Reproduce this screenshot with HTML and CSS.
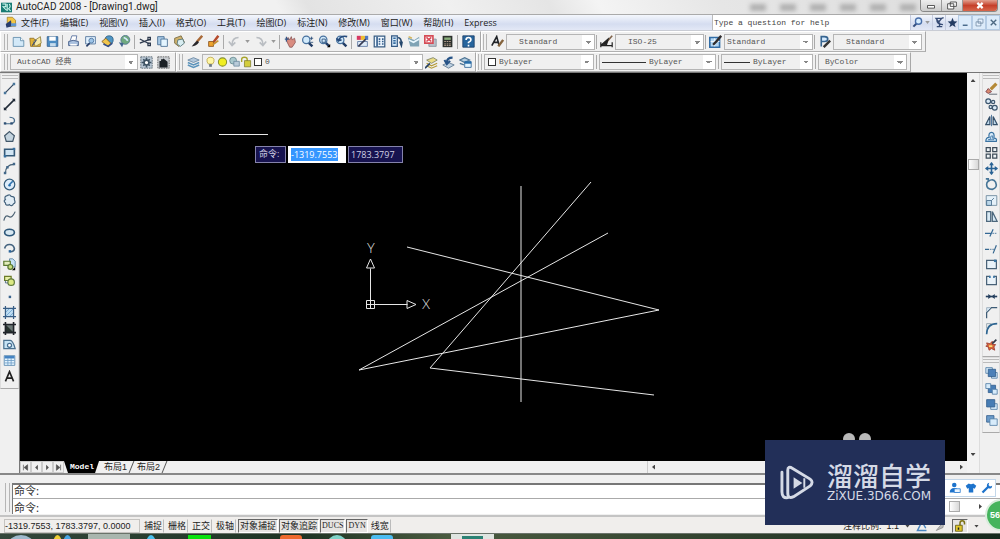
FILE: index.html
```html
<!DOCTYPE html>
<html lang="zh-CN">
<head>
<meta charset="utf-8">
<title>AutoCAD 2008 - [Drawing1.dwg]</title>
<link rel="stylesheet" href="styles.css">
</head>
<body>
<svg class="defs" aria-hidden="true">
  <symbol id="page" viewBox="0 0 16 16"><path d="M1.500 3h9l4 4v7h-13z" fill="#d3e9f8" stroke="#5b87a8"/><path d="M10.500 3v4h4" fill="#fff" stroke="#5b87a8"/></symbol>
  <symbol id="printer" viewBox="0 0 16 16"><path d="M4 7 6 1h6l-1 6" fill="#fff" stroke="#4c6698"/><path d="M2 8q5-3 12 0v5H2z" fill="#aac1df" stroke="#36507e"/><path d="M4 12h8" stroke="#fff" stroke-width="2"/></symbol>
  <symbol id="lens" viewBox="0 0 16 16"><path d="m9 9 5 5" stroke="#223d66" stroke-width="3"/><circle cx="6.500" cy="6" r="4.500" fill="#d2eafb" stroke="#47719e" stroke-width="1.500"/></symbol>
  <symbol id="brush" viewBox="0 0 16 16"><path d="m15 1-7 8" stroke="#a96937" stroke-width="3"/><path d="M9 7q-2 1-7 7 6 0 9-5z" fill="#27262b"/></symbol>
  <symbol id="sheets" viewBox="0 0 16 16"><path d="M2 2h8v10H2z" fill="#a9c9e5" stroke="#41698f"/><path d="M6 5h8v9H6z" fill="#e4f5ff" stroke="#41698f"/></symbol>
  <symbol id="layers" viewBox="0 0 16 16"><path d="m1 5 7-3 7 3-7 3z" fill="#b2c7db" stroke="#63819e"/><path d="m1 8 7 3 7-3M1 11l7 3 7-3" fill="none" stroke="#5c93bb" stroke-width="2"/></symbol>
  <symbol id="hatch" viewBox="0 0 16 16"><path d="M3 3h10v10H3z" fill="#bddcf2"/><path d="m3 8 5-5m-5 10L13 3M8 13l5-5" stroke="#6ca1ce"/><path d="M3 0v16M13 0v16M0 3h16M0 13h16" stroke="#385d85" stroke-width="1.500"/></symbol>
</svg>
<div class="app">
  <header class="titlebar">
    <svg class="logo" viewBox="0 0 16 16"><path d="M0 1h16v14H0z" fill="#197b74"/><path d="M2 3h5v4H3l5 5m1-9v10m3-10q3 4-1 7l3 3" fill="none" stroke="#d8fff5" stroke-width="1.500"/></svg>
    <h1>AutoCAD 2008 - [Drawing1.dwg]</h1>
    <div class="ghost" aria-hidden="true"><i></i><i></i><i></i><i></i><i></i><i></i></div>
    <div class="winbtns">
      <button aria-label="最小化"><svg viewBox="0 0 16 10"><path d="M4 5h8v3H4z" fill="#fff" stroke="#444"/></svg></button>
      <button aria-label="还原"><svg viewBox="0 0 16 10"><path d="M6 1h7v5H6zM3 3h7v6H3z" fill="#fff" stroke="#444"/></svg></button>
      <button class="close" aria-label="关闭"><svg viewBox="0 0 16 10"><path d="m5 2 6 6m0-6L5 8" stroke="#fff" stroke-width="2.500"/></svg></button>
    </div>
  </header>

  <nav class="menubar">
    <svg class="docicon" viewBox="0 0 16 16"><path d="M3 1h7l4 4v8H3z" fill="#f2c544" stroke="#a27d22"/><path d="m1 10 7-5 1 8-7 2z" fill="#283d70"/><path d="M8 9h7v4H8z" fill="#5f95d1"/></svg>
    <button>文件(F)</button><button>编辑(E)</button><button>视图(V)</button><button>插入(I)</button><button>格式(O)</button><button>工具(T)</button><button>绘图(D)</button><button>标注(N)</button><button>修改(M)</button><button>窗口(W)</button><button>帮助(H)</button><button>Express</button>
    <div class="helpbox">
      <input type="text" aria-label="Help" placeholder="Type a question for help">
      <button aria-label="Search"><svg viewBox="0 0 16 16"><path d="m2 14 5-5" stroke="#344e7f" stroke-width="3"/><circle cx="9.500" cy="6" r="4.500" fill="#d7edff" stroke="#4a6fa9" stroke-width="2"/></svg></button>
      <span class="caret"></span>
      <button aria-label="通讯中心"><svg viewBox="0 0 16 16"><path d="M3 2h8l-4 5zM4 3q0 8 9 8M8 8v5M4 14h8M11 2l3-1" fill="none" stroke="#364b75" stroke-width="2"/></svg></button>
      <button aria-label="收藏夹"><svg viewBox="0 0 16 16"><path d="m8 1 2 5 5 .5-4 3.500 1.500 5L8 12l-4.500 3L5 10 1 6.500 6 6z" fill="#243c63"/></svg></button>
      <button class="child" aria-label="最小化图形"><svg viewBox="0 0 16 16"><path d="M4 12h7" stroke="#426486" stroke-width="2"/></svg></button>
      <button class="child" aria-label="还原图形"><svg viewBox="0 0 16 16"><path d="M6 3h7v6H6zM3 7h7v6H3z" fill="#e6f2ff" stroke="#647f99"/></svg></button>
      <button class="child" aria-label="关闭图形"><svg viewBox="0 0 16 16"><path d="m4 4 8 8m0-8-8 8" stroke="#4c6882" stroke-width="2"/></svg></button>
    </div>
  </nav>

  <div class="row first">
    <div class="bar">
      <span class="grip"></span>
      <button aria-label="新建"><svg><use href="#page"/></svg></button>
      <button aria-label="打开"><svg viewBox="0 0 16 16"><path d="M1 4h5l1 2h7v8H2z" fill="#e3b338" stroke="#8f6f22"/><path d="m5 8 9-6 1 8-7 4z" fill="#f6e9a8" stroke="#8f7d36"/><path d="m4 13 5-7" stroke="#435070" stroke-width="1.500"/></svg></button>
      <button aria-label="保存"><svg viewBox="0 0 16 16"><path d="M1.500 2h13v12h-13z" fill="#4c8cc2" stroke="#335f8e"/><path d="M4 2h8v5H4z" fill="#fff"/><path d="M5 10h7v4H5z" fill="#c6dced"/></svg></button>
      <span class="sep"></span>
      <button aria-label="打印"><svg><use href="#printer"/></svg></button>
      <button aria-label="打印预览"><svg viewBox="0 0 16 16"><path d="M2 2h12v9H2z" fill="#e3f2ff" stroke="#4b6e96"/><path d="m3 14 4-4" stroke="#253c67" stroke-width="2"/><circle cx="9" cy="7" r="3" fill="#9dc4e7" stroke="#466e99"/></svg></button>
      <button aria-label="发布"><svg viewBox="0 0 16 16"><circle cx="10" cy="6" r="5" fill="#4f95c3" stroke="#306084"/><path d="m1 8 5-4 6 6-4 4z" fill="#f1c54c" stroke="#7f5a21"/><path d="m3 11 6 3 5-4" fill="none" stroke="#344f88" stroke-width="2"/></svg></button>
      <button aria-label="三维 DWF"><svg viewBox="0 0 16 16"><circle cx="9" cy="6" r="5.500" fill="#6fa97f" stroke="#4e718e"/><path d="M7 3q3 1 5 4" stroke="#d5ecff" fill="none" stroke-width="2"/><path d="m1 9 6 1-2 5z" fill="#43658d"/></svg></button>
      <span class="sep"></span>
      <button aria-label="剪切"><svg viewBox="0 0 16 16"><path d="m1 5 12 6M1 10l13-5" stroke="#2e3a4e" stroke-width="1.500"/><path d="M11 3h3v3h-3zM11 10h3v3h-3z" fill="none" stroke="#2e3a4e" stroke-width="1.500"/></svg></button>
      <button aria-label="复制"><svg><use href="#sheets"/></svg></button>
      <button aria-label="粘贴"><svg viewBox="0 0 16 16"><path d="m2 4 8-3 4 8-7 5-5-4z" fill="#d0b26c" stroke="#71653e"/><path d="m6 6 6-1 2 5-5 4-4-3z" fill="#d9edf1" stroke="#4b6e74"/></svg></button>
      <button aria-label="特性匹配"><svg><use href="#brush"/></svg></button>
      <button aria-label="块编辑器"><svg viewBox="0 0 16 16"><path d="m14 1-6 8" stroke="#b54a2b" stroke-width="3"/><path d="M2 8h6v6H2z" fill="#f0a42d" stroke="#86501e"/><path d="m7 12 7-5" stroke="#c7902d" stroke-width="2"/></svg></button>
      <span class="sep"></span>
      <button aria-label="放弃"><svg viewBox="0 0 16 16"><path d="M13 3Q5 3 5 12M1 8l4 5 4-4" fill="none" stroke="#b9bdc2" stroke-width="2"/></svg></button><span class="caret"></span>
      <button aria-label="重做"><svg viewBox="0 0 16 16"><path d="M3 3q8 0 8 9m4-4-4 5-4-4" fill="none" stroke="#b9bdc2" stroke-width="2"/></svg></button><span class="caret"></span>
      <span class="sep"></span>
      <button aria-label="实时平移"><svg viewBox="0 0 16 16"><path d="m3 7 2-4 2 3 2-4 1 4 3-2 1 5-4 6H7z" fill="#d98c80" stroke="#8c5656"/><path d="M1 5h5M3 2v6" stroke="#365787" stroke-width="1.500"/></svg></button>
      <button aria-label="实时缩放"><svg viewBox="0 0 16 16"><use href="#lens"/><path d="M11 4h4m-2-2v4m-2 3h4" stroke="#244774"/></svg></button>
      <button aria-label="窗口缩放"><svg viewBox="0 0 16 16"><use href="#lens"/><path d="M5 5h4v4H5z" fill="none" stroke="#244774"/><path d="M15 11v4h-4z"/></svg></button>
      <button aria-label="缩放上一个"><svg viewBox="0 0 16 16"><use href="#lens"/><path d="M15 2Q7 0 4 7l-2-3m2 3 4-1" fill="none" stroke="#264b7c" stroke-width="2"/></svg></button>
      <span class="sep"></span>
      <button aria-label="特性"><svg viewBox="0 0 16 16"><path d="M1 1h5v5H1z" fill="#d63863"/><path d="M6 1h5v5H6z" fill="#eebd30"/><path d="M11 1h4v5h-4z" fill="#5278c2"/><path d="M2 8h12v6H2z" fill="#dfebf7" stroke="#56719e"/><path d="m3 14 9-9" stroke="#393d54" stroke-width="2"/></svg></button>
      <button aria-label="设计中心"><svg viewBox="0 0 16 16"><path d="M1.500 1.500h13v13h-13z" fill="#eef7ff" stroke="#385c82" stroke-width="1.500"/><path d="M5 2v12M7 5h2m2 0h2M7 8h2m2 0h2M7 11h2m2 0h2" stroke="#355f8d" stroke-width="2"/></svg></button>
      <button aria-label="工具选项板"><svg viewBox="0 0 16 16"><path d="M2 1h7v13H2z" fill="#d7ebfb" stroke="#365b85" stroke-width="1.500"/><path d="M4 4h3M4 7h3M4 10h3" stroke="#356b9e" stroke-width="2"/><path d="M10 3q4 1 4 7m-2-2 2 5 1-5" fill="none" stroke="#26486d" stroke-width="2"/></svg></button>
      <button aria-label="图纸集"><svg viewBox="0 0 16 16"><path d="m1 3 8 3 6-4v12H4z" fill="#7fa3b5"/><path d="m2 6 6 3 7-4" stroke="#e8f6fd" stroke-width="2" fill="none"/><path d="m2 2 4 2" stroke="#d5b55b" stroke-width="2"/></svg></button>
      <button aria-label="标记集"><svg viewBox="0 0 16 16"><path d="M6 5h9v9H6z" fill="#b8c0c8" stroke="#84909b"/><path d="M1 1h10v9H1z" fill="#fff" stroke="#d54c56" stroke-width="2"/><path d="m3 3 6 5m0-5L3 8" stroke="#da4b58" stroke-width="2"/></svg></button>
      <button aria-label="快速计算器"><svg viewBox="0 0 16 16"><path d="M2 1h12v14H2z" fill="#2d312e"/><path d="M4 3h8v3H4z" fill="#8aae7c"/><path d="M4 8h2m1 0h2m1 0h2M4 11h2m1 0h2m1 0h2M4 13h2m1 0h2m1 0h2" stroke="#d5b9a5"/></svg></button>
      <span class="sep"></span>
      <button aria-label="帮助"><svg viewBox="0 0 16 16"><path d="M1 1h14v14H1z" fill="#27659d" stroke="#173c66"/><path d="M5 6q0-3 3-3t3 3q0 1-3 3v1m0 2v2" fill="none" stroke="#fff" stroke-width="2"/></svg></button>
    </div>
    <div class="bar styles">
      <span class="grip"></span>
      <button aria-label="文字样式"><svg viewBox="0 0 16 16"><path d="M1 13 7 2l3 11M4 9h6" fill="none" stroke="#202327" stroke-width="2"/><path d="m15 6-6 8" stroke="#85643e" stroke-width="3"/></svg></button>
      <select class="combo c88 in" aria-label="文字样式"><option>Standard</option></select>
      <span class="sep"></span>
      <button aria-label="标注样式"><svg viewBox="0 0 16 16"><path d="m15 1-7 8" stroke="#7e6149" stroke-width="2"/><path d="M10 5 2 12h6zM1 9v6M15 9v6M1 13h14" fill="#222" stroke="#222" stroke-width="1.500"/></svg></button>
      <select class="combo c88 in" aria-label="标注样式"><option>ISO-25</option></select>
      <span class="sep"></span>
      <button aria-label="表格样式"><svg viewBox="0 0 16 16"><path d="M1 3h12v12H1z" fill="#b3d7f4" stroke="#326da6" stroke-width="2"/><path d="M2 8h11M7 4v10" stroke="#fff"/><path d="m15 1-6 7-4 4" stroke="#302d2e" stroke-width="3"/></svg></button>
      <select class="combo c88 near" aria-label="表格样式"><option>Standard</option></select>
      <span class="sep"></span>
      <button aria-label="多重引线样式"><svg viewBox="0 0 16 16"><path d="M4 14V2h4q4 0 4 3T8 8H5" fill="#d4eaff" stroke="#376591" stroke-width="2"/><path d="m15 7-4 4-4 4" stroke="#333" stroke-width="3"/></svg></button>
      <select class="combo c88 in" aria-label="多重引线样式"><option>Standard</option></select>
    </div>
  </div>

  <div class="row">
    <div class="bar">
      <span class="grip"></span>
      <select class="combo c128" aria-label="工作空间"><option>AutoCAD 经典</option></select>
      <button aria-label="工作空间设置"><svg viewBox="0 0 16 16"><path d="M1 1h14v14H1z" fill="#b9c7d4" stroke="#4b5964" stroke-dasharray="2 1"/><path d="M8 2v12M2 8h12M4 4l8 8m0-8-8 8" stroke="#3d5161" stroke-width="2"/><circle cx="8" cy="8" r="3" fill="#fff" stroke="#3d5161" stroke-width="2"/></svg></button>
      <button aria-label="我的工作空间"><svg viewBox="0 0 16 16"><path d="M1 1h14v14H1z" fill="#c8ccd0" stroke="#555" stroke-dasharray="2 1"/><path d="M3 6h2V4h2l1-1 5 4v7H3z" fill="#1c2126"/></svg></button>
    </div>
    <div class="bar layerbar">
      <span class="grip"></span>
      <button aria-label="图层特性"><svg><use href="#layers"/></svg></button>
      <div class="layerbox">
        <svg viewBox="0 0 16 16"><path d="M5 11Q2 8 3 4q1-3 5-3t5 3q1 4-2 7z" fill="#fff7a6" stroke="#b09431"/><path d="M6 11h4v4H6z" fill="#6c7884"/></svg>
        <svg viewBox="0 0 16 16"><circle cx="8" cy="8" r="6" fill="#f0ee22" stroke="#88902d" stroke-width="1.500"/></svg>
        <svg viewBox="0 0 16 16"><circle cx="6" cy="6" r="5" fill="#a9c8cd" stroke="#557982"/><path d="M7 7h8v7H7z" fill="#b9cbd9" stroke="#5f7d95"/></svg>
        <svg viewBox="0 0 16 16"><path d="M1 8V4q0-3 4-3t4 3v4" fill="none" stroke="#a8a42b" stroke-width="2"/><path d="M5 6h9v9H5z" fill="#d4cd3d" stroke="#777426"/></svg>
        <span class="swatch"></span>
        <select class="bare" aria-label="图层"><option>0</option></select>
      </div>
      <button aria-label="将对象的图层置为当前"><svg viewBox="0 0 16 16"><path d="m2 5 8-3 5 3-7 4z" fill="#eadd86" stroke="#777d60"/><path d="m2 9 6 3 7-3M2 12l6 3 7-3" fill="none" stroke="#b49a36" stroke-width="1.500"/><path d="m0 15 6-6" stroke="#274267" stroke-width="2"/></svg></button>
      <button aria-label="上一个图层"><svg viewBox="0 0 16 16"><path d="m1 11 7-3 7 3-7 4z" fill="#bed1e1" stroke="#57728b"/><path d="M13 2Q6 2 6 8M3 5l3 5 4-4" fill="none" stroke="#265387" stroke-width="2.500"/></svg></button>
      <button aria-label="图层状态管理器"><svg viewBox="0 0 16 16"><path d="m1 5 6-3 6 3-6 3zM1 9l5 2" fill="#b7cfe1" stroke="#4d7595" stroke-width="1.500"/><path d="M7 7h8v7H7z" fill="#e2f5ff" stroke="#275f93"/><path d="M7 8h8" stroke="#276da9" stroke-width="3"/></svg></button>
    </div>
    <div class="bar props">
      <span class="grip"></span>
      <div class="layerbox c110"><span class="swatch"></span><select class="bare" aria-label="颜色"><option>ByLayer</option></select></div>
      <span class="sep"></span>
      <div class="layerbox c116"><span class="ltype"></span><select class="bare" aria-label="线型"><option>ByLayer</option></select></div>
      <span class="sep"></span>
      <div class="layerbox c92"><span class="ltype short"></span><select class="bare" aria-label="线宽"><option>ByLayer</option></select></div>
      <span class="sep"></span>
      <select class="combo c88" aria-label="打印样式"><option>ByColor</option></select>
    </div>
  </div>

  <main class="work">
    <aside class="tools">
      <span class="hgrip"></span>
      <button aria-label="直线"><svg viewBox="0 0 16 16"><path d="M3 13 13 3" stroke="#33475d" stroke-width="1.500"/><path d="M1 12h3v3H1zM12 1h3v3h-3z" fill="#48769b"/></svg></button>
      <button aria-label="构造线"><svg viewBox="0 0 16 16"><path d="M2 14 14 2" stroke="#222c38" stroke-width="2"/><path d="M1 11v4h4zM11 1h4v4z" fill="#1f2937"/></svg></button>
      <button aria-label="多段线"><svg viewBox="0 0 16 16"><path d="M2 12h9q4-2 3-5t-6-3" fill="none" stroke="#486d8c" stroke-width="1.500"/><path d="M1 10h3v3H1zM9 10h3v3H9z" fill="#2e5074"/></svg></button>
      <button aria-label="正多边形"><svg viewBox="0 0 16 16"><path d="m8 2 6 5-2 7H4L2 7z" fill="#c4d4df" stroke="#42586a" stroke-width="1.500"/></svg></button>
      <button aria-label="矩形"><svg viewBox="0 0 16 16"><path d="M2 4h12v8H2z" fill="#d2e6f4" stroke="#355a79" stroke-width="2"/><path d="M1 11h3v3H1zM12 2h3v3h-3z" fill="#38709f"/></svg></button>
      <button aria-label="圆弧"><svg viewBox="0 0 16 16"><path d="M3 14Q3 3 14 3" fill="none" stroke="#445f74" stroke-width="1.500"/><path d="M1 12h3v3H1zM4 5h3v3H4zM12 1h3v3h-3z" fill="#426789"/></svg></button>
      <button aria-label="圆"><svg viewBox="0 0 16 16"><circle cx="8" cy="8" r="6.500" fill="#ddecfa" stroke="#355d7c" stroke-width="1.500"/><path d="m8 8 4-4" stroke="#2c72ae" stroke-width="2"/><circle cx="8" cy="9" r="1.500" fill="#236eae"/></svg></button>
      <button aria-label="修订云线"><svg viewBox="0 0 16 16"><path d="M5 2q4-2 5 1 5 0 4 4 2 4-1 5-2 4-5 1-5 2-5-2-3-3 0-4-2-4 2-5z" fill="#e2edf5" stroke="#45637d" stroke-width="1.500"/></svg></button>
      <button aria-label="样条曲线"><svg viewBox="0 0 16 16"><path d="M1 13q2-8 6-5t8-6" fill="none" stroke="#4d6273" stroke-width="1.500"/></svg></button>
      <button aria-label="椭圆"><svg viewBox="0 0 16 16"><ellipse cx="8" cy="8" rx="6" ry="4" fill="#d8e8f2" stroke="#2d577a" stroke-width="2"/></svg></button>
      <button aria-label="椭圆弧"><svg viewBox="0 0 16 16"><path d="M2 8q1-5 6-5t6 5q0 4-5 4" fill="none" stroke="#45637f" stroke-width="2"/><path d="M7 10h3v3H7z" fill="#2c659b"/></svg></button>
      <button aria-label="插入块"><svg viewBox="0 0 16 16"><path d="M8 1h4l3 3v7H8z" fill="#c6e2f5" stroke="#547b9b"/><path d="M1 4h8v5H1z" fill="#e3edbd" stroke="#5b792f" stroke-width="1.500"/><circle cx="9" cy="11" r="3" fill="#c9dd80" stroke="#567631" stroke-width="1.500"/><path d="M15 11v4h-4z"/></svg></button>
      <button aria-label="创建块"><svg viewBox="0 0 16 16"><path d="M2 3h8v5H2z" fill="#e6efa7" stroke="#6b7b27" stroke-width="1.500"/><circle cx="10" cy="10" r="4" fill="#dce984" stroke="#617b3c" stroke-width="1.500"/><path d="M3 8v3h3" fill="none" stroke="#435f7b"/></svg></button>
      <button aria-label="点"><svg viewBox="0 0 16 16"><path d="M7 7h3v3H7z" fill="#3a648e"/></svg></button>
      <button aria-label="图案填充"><svg><use href="#hatch"/></svg></button>
      <button aria-label="渐变色"><svg viewBox="0 0 16 16"><path d="M3 3h10v10H3z" fill="#6c7977"/><path d="m3 3 10 10H3z" fill="#27332f"/><path d="M3 0v16M13 0v16M0 3h16M0 13h16" stroke="#20242a" stroke-width="2"/></svg></button>
      <button aria-label="面域"><svg viewBox="0 0 16 16"><path d="M1 3h8q3 0 6 10H1z" fill="#c7e3f4" stroke="#4b7190" stroke-width="1.500"/><circle cx="8" cy="9" r="2.500" fill="#fff" stroke="#466f92" stroke-width="1.500"/></svg></button>
      <button aria-label="表格"><svg viewBox="0 0 16 16"><path d="M1.500 2h13v12h-13z" fill="#e5f5ff" stroke="#5585ac"/><path d="M2 4h12" stroke="#4382c2" stroke-width="3"/><path d="M2 8h12M2 11h12M6 5v9m4-9v9" stroke="#6c9dc6"/></svg></button>
      <button aria-label="多行文字"><svg viewBox="0 0 16 16"><path d="M3 14 8 2l5 12M5 10h6" fill="none" stroke="#222" stroke-width="2"/></svg></button>
    </aside>

    <section class="view">
      <div class="canvas">
        <svg class="drawing" role="img" aria-label="图形">
          <g fill="none" stroke="#e6e6e6">
            <path d="M199 61.500h49M501 113v216M571 109 410 295l224 27M588 160 339 297l300-60-252-63"/>
            <path d="M350.500 235.500v-40M346.500 231.500h41M346.500 227.500h8v8h-8zM350.500 186l-4 9h8zM396 231.500l-9-4v8z"/>
          </g>
          <text x="347" y="180">Y</text><text x="402" y="236">X</text>
        </svg>
        <form class="dyn">
          <label for="dx">命令:</label>
          <span class="cell on"><mark><input id="dx" value="-1319.7553"></mark></span>
          <input class="cell" aria-label="Y" value="1783.3797">
        </form>
      </div>
      <div class="tabs">
        <button class="nav" aria-label="第一个"><svg viewBox="0 0 10 10"><path d="M2 1v8M8 1v8L3 5z" fill="#555" stroke="#555"/></svg></button>
        <button class="nav" aria-label="上一个"><svg viewBox="0 0 10 10"><path d="M7 1v8L3 5z" fill="#555"/></svg></button>
        <button class="nav" aria-label="下一个"><svg viewBox="0 0 10 10"><path d="M3 1v8l4-4z" fill="#555"/></svg></button>
        <button class="nav" aria-label="最后一个"><svg viewBox="0 0 10 10"><path d="M8 1v8M2 1v8l5-4z" fill="#555" stroke="#555"/></svg></button>
        <button class="tab active">Model</button><button class="tab">布局1</button><button class="tab">布局2</button>
        <div class="hscroll"><span class="tri left"></span><span class="tri right"></span></div>
      </div>
    </section>

    <div class="vscroll"><span class="tri up"></span><span class="thumb"></span><span class="tri down"></span></div>

    <aside class="modify">
      <div class="tools">
      <span class="hgrip"></span>
      <button aria-label="删除"><svg viewBox="0 0 16 16"><path d="m14 2-7 7" stroke="#b48935" stroke-width="4"/><path d="m4 8 4 4-4 2-3-2z" fill="#da8a70" stroke="#743742"/><path d="M5 15h10" stroke="#485260"/></svg></button>
      <button aria-label="复制对象"><svg viewBox="0 0 16 16"><g fill="#dae9f5" stroke="#3c566e" stroke-width="1.500"><circle cx="4" cy="4" r="3"/><circle cx="10" cy="5" r="2"/><circle cx="7" cy="11" r="2"/><circle cx="12" cy="12" r="3"/></g></svg></button>
      <button aria-label="镜像"><svg viewBox="0 0 16 16"><path d="M6 3v10H1zM10 3v10h5z" fill="#bfd9eb" stroke="#36516a" stroke-width="1.500"/><path d="M8 1v14" stroke="#2f5f8c"/></svg></button>
      <button aria-label="偏移"><svg viewBox="0 0 16 16"><path d="M1 14h13q1-4-3-4 1-7-3-7T5 9q-4 0-4 5z" fill="#d7ebfa" stroke="#3a73a2" stroke-width="1.500"/><path d="M4 12h7q-2-1-2-5-3 0-2 4z" fill="none" stroke="#3a73a2"/></svg></button>
      <button aria-label="阵列"><svg viewBox="0 0 16 16"><path d="M1.500 2h5v5h-5zM9.500 2h5v5h-5zM1.500 10h5v5h-5zM9.500 10h5v5h-5z" fill="#edf2f5" stroke="#3d4c59" stroke-width="1.500"/></svg></button>
      <button aria-label="移动"><svg viewBox="0 0 16 16"><path d="M8 1v14M1 8h14" stroke="#286294" stroke-width="2"/><path d="M5 4h6L8 0zM5 12h6l-3 4zM4 5v6L0 8zM12 5v6l4-3z" fill="#286294"/></svg></button>
      <button aria-label="旋转"><svg viewBox="0 0 16 16"><path d="M4 4q6-4 9 1 3 7-4 9-7 0-7-6 0-3 2-4V1H1" fill="none" stroke="#477698" stroke-width="2"/></svg></button>
      <button aria-label="缩放"><svg viewBox="0 0 16 16"><path d="M1.500 2h13v12h-13z" fill="#e5f1f9" stroke="#668298"/><path d="M2 8h6v6H2z" fill="#bdd8ea" stroke="#426987"/><path d="M8 8l3-3" stroke="#426987"/></svg></button>
      <button aria-label="拉伸"><svg viewBox="0 0 16 16"><path d="M2 2h5v12H2zM9 2l6 12H9z" fill="#d9eaf5" stroke="#4d687d" stroke-width="1.500"/></svg></button>
      <button aria-label="修剪"><svg viewBox="0 0 16 16"><path d="m6 13 4-9M0 9h7" stroke="#346895" stroke-width="1.500"/><path d="M9 9h6" stroke="#346895" stroke-dasharray="2 1"/></svg></button>
      <button aria-label="延伸"><svg viewBox="0 0 16 16"><path d="m10 14 4-10M0 9h5" stroke="#376890" stroke-width="1.500"/><path d="M6 9h5" stroke="#376890" stroke-dasharray="2 1"/></svg></button>
      <button aria-label="打断于点"><svg viewBox="0 0 16 16"><path d="M2 3h12v10H2z" fill="#e9f2f9" stroke="#486177" stroke-width="1.500"/><path d="M11 2h3v3h-3z" fill="#3975a4"/></svg></button>
      <button aria-label="打断"><svg viewBox="0 0 16 16"><path d="M6 3H2v10h12V3h-3" fill="#e9f2f9" stroke="#486177" stroke-width="1.500"/><path d="M5 2h2v3H5zM10 2h2v3h-2z" fill="#3975a4"/></svg></button>
      <button aria-label="合并"><svg viewBox="0 0 16 16"><path d="M1 8h14" stroke="#243f5e" stroke-width="2"/><path d="M4 5v6l4-3zM12 5v6L8 8z" fill="#243f5e"/></svg></button>
      <button aria-label="倒角"><svg viewBox="0 0 16 16"><path d="M2 15V8l6-6h7" fill="none" stroke="#3d5b75" stroke-width="1.500"/><path d="M2 7V2h5" fill="#d7e8f4" stroke="#96a9b8"/></svg></button>
      <button aria-label="圆角"><svg viewBox="0 0 16 16"><path d="M2 15Q2 2 15 2" fill="none" stroke="#2e6591" stroke-width="2"/><path d="M2 8V2h6" fill="none" stroke="#8c9ca9"/></svg></button>
      <button aria-label="分解"><svg viewBox="0 0 16 16"><path d="m2 6 4 1 3-3v4l4 0-2 3 1 4-4-2-3 2-1-4-3-1 2-1z" fill="#d9693c" stroke="#9b382c"/><path d="m9 7 5-5" stroke="#333b49" stroke-width="2"/><path d="M5 10h4" stroke="#ffe476" stroke-width="2"/></svg></button>
      </div>
      <div class="tools">
      <span class="hgrip"></span>
      <button aria-label="前置"><svg viewBox="0 0 16 16"><path d="M1 2h8v7H1zM8 8h7v7H8z" fill="#d7ebfa" stroke="#4f7ca5"/><path d="M4 4h9v9H4z" fill="#4b80b8" stroke="#315e8c"/></svg></button>
      <button aria-label="后置"><svg viewBox="0 0 16 16"><path d="M4 4h9v9H4z" fill="#477db5" stroke="#315e8c"/><path d="M1 2h6v6H1zM9 9h6v6H9z" fill="#d7ebfa" stroke="#4f7ca5"/></svg></button>
      <button aria-label="置于对象之上"><svg viewBox="0 0 16 16"><path d="M7 7h8v7H7z" fill="#d7ebfa" stroke="#4f7ca5"/><path d="M2 2h10v9H2z" fill="#477db5" stroke="#315e8c"/></svg></button>
      <button aria-label="置于对象之下"><svg viewBox="0 0 16 16"><path d="M2 2h9v8H2z" fill="#6b9bca" stroke="#315e8c"/><path d="M6 6h9v8H6z" fill="#d7ebfa" stroke="#4f7ca5"/></svg></button>
      </div>
    </aside>
  </main>

  <section class="command">
    <span class="grip"></span>
    <div class="lines">
      <p>命令:</p>
      <div class="prompt"><label for="cmd">命令:</label><input id="cmd" type="text"><span class="thumb"></span><span class="tri right"></span></div>
    </div>
  </section>

  <footer class="status">
    <output>-1319.7553, 1783.3797, 0.0000</output>
    <button>捕捉</button><button>栅格</button><button>正交</button><button>极轴</button><button class="on">对象捕捉</button><button class="on">对象追踪</button><button class="on mono">DUCS</button><button class="on mono">DYN</button><button>线宽</button>
    <div class="tray">
      <span>注释比例:&nbsp;&nbsp;1:1</span><span class="tri down"></span>
      <svg viewBox="0 0 16 16"><path d="m8 2-6 12h12M8 2l5 9" fill="none" stroke="#4a86c1" stroke-width="2"/></svg>
      <svg viewBox="0 0 16 16"><path d="m3 14 10-12-1 8z" fill="#bbb" stroke="#888"/></svg>
      <button class="on" aria-label="锁定"><svg viewBox="0 0 16 16"><path d="M8 8V4q0-3 3-3t3 3v2" fill="none" stroke="#7c7214" stroke-width="2"/><path d="M2 7h9v8H2z" fill="#e0c62c" stroke="#58510f"/><path d="M6 10v3" stroke="#222" stroke-width="2"/></svg></button>
      <span class="tri down"></span>
    </div>
  </footer>

  <div class="taskbar" aria-hidden="true">
    <i class="t1"></i><i class="t2"></i><i class="t3"></i><i class="t4"></i><i class="t5"></i><i class="t6"></i><i class="t7"></i><i class="t8"></i><i class="t9"></i><i class="t10"></i>
  </div>
</div>

<div class="ears" aria-hidden="true"><i></i><i></i></div>
<div class="ime">
  <button aria-label="用户"><svg viewBox="0 0 16 16"><circle cx="7" cy="4" r="3" fill="#1d73cc"/><path d="M1 14q0-6 6-6t6 6z" fill="#1d73cc"/><path d="M7 9h8v5H7z" fill="#eaf5ff" stroke="#1d73cc"/></svg></button>
  <button aria-label="皮肤"><svg viewBox="0 0 16 16"><path d="M5 2q3 2 6 0l4 3-2 4-2-1v6H5V8L3 9 1 5z" fill="#1d73cc"/></svg></button>
  <button aria-label="设置"><svg viewBox="0 0 16 16"><path d="m2 14 8-8" stroke="#1d73cc" stroke-width="3"/><path d="M11 1Q7 2 8 6t6 2l1-3-3 1-2-2z" fill="#1d73cc"/></svg></button>
</div>
<div class="ball">56</div>
<div class="watermark">
  <svg viewBox="0 0 36 36"><g fill="none" stroke="#d5dae6" stroke-width="3" stroke-linecap="round"><path d="M2 7v20q0 7 6 6"/><path d="M8 28V5q0-5 5-2l18 11q4 3 0 7L14 32q-6 3-6-4"/></g><path d="m14 12 9 6-9 6zM24 13h2v10h-2z" fill="#d5dae6"/></svg>
  <div><strong>溜溜自学</strong><span>ZiXUE.3D66.COM</span></div>
</div>
</body>
</html>
```
FILE: styles.css
```css
* { box-sizing: border-box; }
html, body { height: 100%; }
body {
  margin: 0;
  position: relative;
  overflow: hidden;
  background: #f0f0f0;
  color: #222;
  font: 9px/12px "Liberation Sans", "Noto Sans CJK SC", sans-serif;
}
button, input, select { font: inherit; color: inherit; margin: 0; padding: 0; border: 0; background: none; border-radius: 0; outline: 0; }
svg { display: block; flex: none; }
.defs { position: absolute; width: 0; height: 0; }
.app { display: flex; flex-direction: column; min-height: 100vh; }

.titlebar {
  display: flex;
  align-items: center;
  height: 15px;
  padding-left: 1px;
  background: linear-gradient(60deg, #f1f1f1 28%, #e3e3e3 31%, #f0f0f0 45%, #e5e5e5 55%, #f4f4f4 60%, #e6e6e6 72%, #dcdcdc);
  border-bottom: 1px solid #aaa;
}
.logo { width: 11px; height: 11px; }
.titlebar h1 { margin: 0 0 0 4px; font: 10px/14px Roboto, sans-serif; }
.ghost { display: flex; gap: 14px; margin-left: auto; margin-right: 4px; filter: blur(2px); }
.ghost i { width: 16px; height: 7px; background: #b0b0b0; }
.winbtns { display: flex; align-self: flex-start; height: 12px; margin-right: 2px; border: 1px solid #888; border-top: 0; border-radius: 0 0 4px 4px; overflow: hidden; }
.winbtns button { display: grid; place-items: center; width: 21px; background: linear-gradient(#eee, #ccc); border-right: 1px solid #999; }
.winbtns svg { width: 14px; height: 9px; }
.winbtns .close { width: 34px; border: 0; background: linear-gradient(#e2a08f, #c5402a 50%, #d8674c); }

.menubar { display: flex; align-items: center; height: 16px; background: linear-gradient(#f4f7fd, #d5ddf0 60%, #e3e8f6); border-bottom: 1px solid #c9ccd4; }
.docicon { width: 12px; height: 13px; margin: 0 4px 0 5px; }
.menubar > button { padding: 0 6px 0 5px; font: 9px/15px "Open Sans", "Noto Sans CJK SC", sans-serif; }
.menubar > button:first-of-type { padding-left: 0; }
.helpbox { display: flex; align-items: center; margin-left: auto; }
.helpbox input { width: 198px; height: 15px; padding-left: 1px; background: #fff; border-left: 1px solid #bbb; font: 8px/12px "Liberation Mono", monospace; }
.helpbox input::placeholder { color: #444; opacity: 1; }
.helpbox button { display: grid; place-items: center; width: 13px; height: 15px; border-left: 1px solid #c5cce0; }
.helpbox .child { width: 14px; background: #dcebfa; border: 1px solid #b4cbe4; }
.helpbox svg { width: 11px; height: 11px; }

.row { display: flex; height: 20px; background: #f0f0f0; }
.row.first { height: 21px; }
.bar { display: flex; align-items: center; padding: 0 3px; border: 1px solid #fff; border-right-color: #a8a8a8; border-bottom-color: #b0b0b0; }
.grip { width: 4px; height: 16px; margin-right: 2px; border: 1px solid #b5b5b5; border-width: 0 1px; flex: none; }
.sep { width: 1px; height: 14px; margin: 0 2px 0 1px; background: #aaa; }
.bar > button { display: grid; place-items: center; width: 17px; height: 17px; }
.bar > button svg { width: 13px; height: 13px; }
.styles { padding-left: 1px; }
.styles .sep { margin: 0 1px; }
.props { padding-left: 1px; }
.props .sep { margin: 0 2px; }
.layerbar { padding: 0 1px 0 2px; }
.caret { width: 9px; height: 3px; background: #999; clip-path: polygon(25% 0, 75% 0, 50% 100%); }
.combo, .bare { appearance: none; font: 8px/12px "Liberation Mono", "Noto Sans CJK SC", monospace; color: #555; }
.combo, .layerbox {
  height: 16px;
  border: 1px solid #b5b5b5;
  background-color: #f0f0f0;
  background-image: linear-gradient(to bottom left, #888 50%, transparent 0), linear-gradient(to bottom right, #888 50%, transparent 0), linear-gradient(#fff, #fff);
  background-position: right 6px top 6px, right 3px top 6px, right;
  background-size: 3px 3px, 3px 3px, 12px 100%;
  background-repeat: no-repeat;
}
.combo { padding-left: 6px; }
.combo.in { padding-left: 12px; }
.combo.near { padding-left: 2px; }
.c88 { width: 89px; }
.c128 { width: 128px; }
.layerbox { display: flex; align-items: center; gap: 1px; width: 221px; padding-left: 2px; }
.layerbox svg { width: 11px; height: 12px; }
.c110 { width: 110px; }
.c116 { width: 117px; }
.c92 { width: 92px; }
.bare { flex: 1; min-width: 0; padding-left: 2px; }
.swatch { flex: none; width: 8px; height: 8px; margin-left: 1px; border: 1px solid #333; background: #fff; }
.ltype { width: 44px; height: 1px; background: #333; flex: none; }
.ltype.short { width: 26px; }

.work { display: flex; flex: 1; min-height: 0; border-top: 1px solid #777; }
.tools { display: flex; flex-direction: column; align-items: center; width: 19px; align-self: flex-start; padding: 1px 0 4px; border: 1px solid #ddd; border-bottom-color: #aaa; }
.tools button { display: grid; place-items: center; width: 17px; height: 16px; }
.tools svg { width: 13px; height: 13px; }
.hgrip { width: 16px; height: 4px; margin-bottom: 1px; border: 1px solid #bbb; border-width: 1px 0; }
.view { display: flex; flex: 1; min-width: 0; flex-direction: column; border-left: 1px solid #777; }
.canvas { position: relative; flex: 1; background: #000; }
.drawing { position: absolute; width: 100%; height: 100%; }
.drawing text { fill: #e6e6e6; font: 300 13px Lato, sans-serif; }
.dyn { position: absolute; left: 235px; top: 73px; display: flex; gap: 2px; color: #d0d0e4; font: 9px/14px "Open Sans", "Noto Sans CJK SC", sans-serif; }
.dyn label, .dyn .cell { height: 17px; border: 1px solid #8583ab; background: #17134f; }
.dyn label { width: 31px; padding-left: 3px; }
.dyn .cell { width: 55px; padding-left: 2px; }
.dyn .on { width: 58px; padding: 1px 2px; background: #fff; border-color: #fff; }
.dyn mark { display: block; width: 47px; height: 13px; background: #3596ff; }
.dyn mark input { width: 47px; height: 13px; color: #fff; }
.tabs { display: flex; height: 12px; background: #f0f0f0; }
.nav { width: 11px; border: 1px solid #ccc; display: grid; place-items: center; }
.nav svg { width: 7px; height: 7px; }
.tab { position: relative; padding: 0 5px; font: 9px/12px "Liberation Sans", "Noto Sans CJK SC", sans-serif; }
.tab::after { content: ""; position: absolute; top: 0; right: 0; width: 1px; height: 12px; background: #555; transform: skewX(-22deg); }
.tab.active { padding: 0 5px 0 6px; color: #fff; background: #000; font: bold 8px/12px "Liberation Mono", monospace; clip-path: polygon(0 0, 100% 0, calc(100% - 4px) 100%, 4px 100%); }
.hscroll { display: flex; flex: 1; align-items: center; justify-content: space-between; max-width: 320px; margin-left: auto; padding: 0 4px; border-left: 1px solid #ccc; }
.tri { width: 3px; height: 5px; background: #444; flex: none; }
.tri.left { clip-path: polygon(100% 0, 100% 100%, 0 50%); }
.tri.right { clip-path: polygon(0 0, 100% 50%, 0 100%); }
.tri.up, .tri.down { width: 5px; height: 3px; }
.tri.up { clip-path: polygon(50% 0, 100% 100%, 0 100%); }
.tri.down { clip-path: polygon(0 0, 100% 0, 50% 100%); }
.vscroll { display: flex; flex-direction: column; align-items: center; width: 12px; padding: 6px 0 17px; background: #f3f3f3; }
.thumb { width: 11px; height: 11px; border: 1px solid #aaa; background: linear-gradient(90deg, #fff, #d8d8d8); }
.vscroll .thumb { margin-top: 77px; }
.vscroll .down { margin-top: auto; }
.modify { width: 21px; padding-left: 2px; border-left: 1px solid #ddd; }
.modify .tools { width: 18px; }

.command { display: flex; height: 42px; padding: 8px 0 1px 5px; border-top: 2px solid #888; background: #f0f0f0; }
.command .grip { height: 29px; width: 5px; }
.lines { flex: 1; display: flex; flex-direction: column; border: 1px solid #777; border-width: 2px 0 0 1px; background: #fff; font: 11px/14px "Noto Sans CJK SC", sans-serif; color: #333; }
.lines p { margin: 0; flex: 1; padding-left: 1px; border-bottom: 1px solid #aaa; line-height: 10px; }
.prompt { display: flex; align-items: center; height: 15px; padding-left: 1px; gap: 3px; }
.prompt input { flex: 1; }
.prompt .thumb { margin-right: 16px; }
.prompt .tri { margin-right: 18px; }

.status { display: flex; align-items: center; gap: 2px; height: 18px; padding: 2px 0 0 4px; border-top: 2px solid #c4c4c4; background: #f0eeec; }
.status output { width: 136px; height: 14px; line-height: 13px; border: 1px solid #c5c3c0; white-space: nowrap; }
.status button { height: 14px; padding: 0 1px; border: 1px solid transparent; border-right-color: #bbb; line-height: 12px; white-space: nowrap; }
.status .on { border-color: #666 #fff #fff #666; background: #e6e4e2; }
.status .mono { font-family: "Liberation Serif", serif; font-size: 8px; }
.status button:nth-of-type(n+6) { margin-left: -1px; }
.tray { display: flex; align-items: center; gap: 6px; margin-left: auto; padding-right: 21px; }
.tray span:first-child { white-space: nowrap; }
.tray svg { width: 12px; height: 12px; }

.taskbar { position: relative; display: flex; height: 6px; overflow: hidden; background: linear-gradient(90deg, #34473b, #1d3323 30%, #4b5b40 45%, #16281c); border-top: 1px solid #6a736a; }
.taskbar i { position: absolute; top: 1px; width: 20px; height: 20px; border-radius: 50%; }
.taskbar .t1 { left: 8px; width: 26px; background: #9fb9cc; }
.taskbar .t2 { left: 53px; width: 9px; background: #f0cf36; }
.taskbar .t3 { left: 63px; width: 9px; background: #49a6e6; }
.taskbar .t4 { left: 88px; top: 0; width: 42px; border-radius: 0; background: #a9b6ae; }
.taskbar .t5 { left: 146px; width: 10px; background: #4bc1ee; }
.taskbar .t6 { left: 188px; width: 23px; border-radius: 0; background: #09e20e; }
.taskbar .t7 { left: 280px; width: 22px; border-radius: 3px; background: #ef6a2f; }
.taskbar .t8 { left: 327px; background: #7fd3c8; }
.taskbar .t9 { left: 371px; width: 22px; border-radius: 3px; background: #4cbcf1; }
.taskbar .t10 { left: 451px; top: 0; width: 43px; border: 1px solid #dfe5e1; border-width: 2px 11px 0; border-radius: 0; background: #2b8274; }

.ears { position: absolute; right: 129px; bottom: 94px; display: flex; gap: 4px; }
.ears i { width: 12px; height: 12px; border-radius: 50%; background: #b8b8b8; }
.ime { position: absolute; right: 4px; bottom: 42px; display: flex; justify-content: space-around; align-items: center; width: 52px; height: 18px; padding-left: 2px; background: #fff; border: 1px solid #c3d7ea; }
.ime svg { width: 12px; height: 12px; }
.ball { position: absolute; right: -17px; bottom: 8px; width: 32px; height: 32px; padding-left: 3px; border: 2px solid #d9eddc; border-radius: 50%; background: #45b45c; color: #fff; font: bold 9px/28px "Liberation Sans", sans-serif; }
.watermark { position: absolute; right: 55px; bottom: 14px; display: flex; align-items: center; gap: 12px; width: 180px; height: 85px; padding-left: 15px; background: #222f58; color: #d5dae6; }
.watermark svg { width: 35px; height: 36px; }
.watermark strong { display: block; font: 500 26px/26px "Noto Sans CJK SC", sans-serif; }
.watermark span { display: block; padding-top: 1px; font: 12px/15px "DejaVu Sans", sans-serif; white-space: nowrap; }
```
